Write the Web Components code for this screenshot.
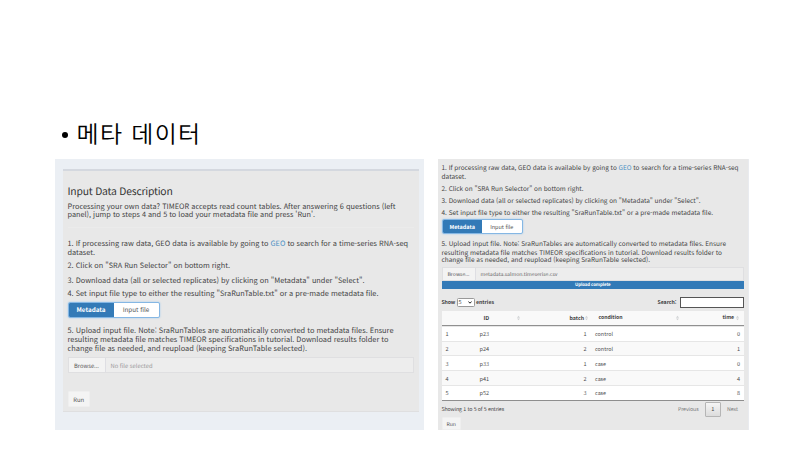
<!DOCTYPE html>
<html lang="ko">
<head>
<meta charset="utf-8">
<title>메타 데이터</title>
<style>
html,body{margin:0;background:#fff}
body{width:800px;height:450px;overflow:hidden;font-family:"Noto Sans CJK KR","Noto Sans",sans-serif;color:#444;text-rendering:geometricPrecision}
</style>
</head>
<body>
<slide-page></slide-page>
<script>
// One line of text, sized so that it fills the width in its "w" attribute.
class FitLine extends HTMLElement{
  constructor(){
    super();
    this.attachShadow({mode:'open'}).innerHTML=`<style>
      :host{display:block;white-space:nowrap;height:var(--lh,9px);line-height:calc(var(--lh,9px) + var(--drop,0px))}
      span{display:inline-block;vertical-align:top}
      ::slotted(a){color:#4a90c4}
    </style><span><slot></slot></span>`;
  }
  connectedCallback(){
    const w=parseFloat(this.getAttribute('w'));
    if(!w)return;
    const s=this.shadowRoot.querySelector('span');
    const n=this.textContent.length;
    const size=parseFloat(getComputedStyle(s).fontSize);
    if(n>2&&!this.hasAttribute('track')){
      const k=w/s.getBoundingClientRect().width;
      s.style.fontSize=size*Math.min(1.12,Math.max(.94,k))+'px';
    }
    const natural=s.getBoundingClientRect().width;
    s.style.letterSpacing=((w-natural)/n)+'px';
  }
}

class ToggleGroup extends HTMLElement{
  constructor(){
    super();
    this.attachShadow({mode:'open'}).innerHTML=`<style>
      :host{display:flex;box-sizing:border-box;width:var(--tw);height:var(--th);border:1px solid #85b7e4;border-radius:2px;background:#fff;box-shadow:0 0 2px #9cc8ee;font-size:var(--tf);overflow:hidden}
      div{flex:1;display:flex;align-items:center;justify-content:center;--lh:10px;--drop:0px;color:#555}
      .on{background:#337ab7;color:#fff;font-weight:700}
    </style><div class="on"><fit-line class="m">Metadata</fit-line></div><div><fit-line class="i">Input file</fit-line></div>`;
    this.shadowRoot.querySelector('.m').setAttribute('w',this.getAttribute('mw'));
    this.shadowRoot.querySelector('.i').setAttribute('w',this.getAttribute('iw'));
  }
}

class FileField extends HTMLElement{
  constructor(){
    super();
    this.attachShadow({mode:'open'}).innerHTML=`<style>
      :host{display:flex;box-sizing:border-box;border:1px solid #dfdfe1;background:#ededed;align-items:stretch;--lh:10px;--drop:1px}
      .b{box-sizing:border-box;width:var(--bw);background:#f3f3f3;border-right:1px solid #dedee3;display:flex;align-items:center;justify-content:center;color:#555}
      .n{display:flex;align-items:center;padding-left:5px;color:var(--nc,#999)}
    </style><div class="b"><slot name="button"></slot></div><div class="n"><slot></slot></div>`;
  }
}

class RunButton extends HTMLElement{
  constructor(){
    super();
    this.attachShadow({mode:'open'}).innerHTML=`<style>
      :host{display:flex;align-items:center;justify-content:center;box-sizing:border-box;background:#f4f4f4;border:1px solid #efefef;border-radius:1px;color:#555;--lh:10px;--drop:1px}
    </style><slot></slot>`;
  }
}

class SortMark extends HTMLElement{
  constructor(){
    super();
    this.attachShadow({mode:'open'}).innerHTML=`<style>:host{display:block;width:3px;height:6px}svg{display:block}</style>
    <svg width="3" height="6" viewBox="0 0 4 7"><path d="M0 3 2 .5 4 3ZM0 4 2 6.5 4 4Z" fill="#d0d2d4"/></svg>`;
  }
}

class DataGrid extends HTMLElement{
  constructor(){
    super();
    const rows=[[1,'p23',1,'control',0],[2,'p24',2,'control',1],[3,'p33',1,'case',0],[4,'p41',2,'case',4],[5,'p52',3,'case',8]];
    const cw={control:18,case:11};
    this.attachShadow({mode:'open'}).innerHTML=`<style>
      :host{display:block;font-size:5.5px;border-bottom:1px solid #8e8e8e;--lh:9px;--drop:1.4px}
      .r{display:grid;grid-template-columns:38px 80px 27px 8.5px 83px 62px 3px;align-items:center;box-sizing:border-box;height:14.8px;background:#fff;border-top:1px solid #e6e6e6;color:#4c4c4c}
      .r:nth-child(even){background:#f9f9f9}
      .r:nth-child(2){border-top:0}
      .r>:first-child{padding-left:4px}
      .num{justify-self:end}
      .h{height:15px;background:none;border:0;border-bottom:1px solid #909090;font-weight:700;color:#444;grid-template-columns:42px 33px 53px 15px 4px 10px 77px 49px 9.5px 6px}
      .h>*{justify-self:start}
      .h>.num{justify-self:end}
      .h>:last-child{justify-self:end;margin-right:1px}
    </style>
    <div class="r h"><i></i><fit-line w="5.5">ID</fit-line><sort-mark></sort-mark><fit-line w="14.5">batch</fit-line><sort-mark></sort-mark><i></i><fit-line w="24">condition</fit-line><sort-mark></sort-mark><fit-line w="11.5" class="num">time</fit-line><sort-mark></sort-mark></div>
    ${rows.map(r=>`<div class="r"><fit-line w="3">${r[0]}</fit-line><fit-line w="9.5">${r[1]}</fit-line><fit-line class="num" w="3">${r[2]}</fit-line><i></i><fit-line w="${cw[r[3]]}">${r[3]}</fit-line><fit-line class="num" w="3">${r[4]}</fit-line></div>`).join('')}`;
  }
}

class InputPanel extends HTMLElement{
  constructor(){
    super();
    this.attachShadow({mode:'open'}).innerHTML=`<style>
      :host{display:block;box-sizing:border-box;width:369px;height:271px;background:#ebeff4;padding:10px 5px 0 8px}
      .box{box-sizing:border-box;width:356px;height:243px;background:#e8e8e8;border-top:2px solid #d4d8df;border-bottom:1px solid #dfdfe0;padding:12px 5px 0 4.5px;font-size:7.6px;--lh:9.1px;--drop:2.4px;display:flex;flex-direction:column;align-items:flex-start}
      .t{font-size:11px;--lh:14px;color:#333;margin-bottom:3.7px}
      hr{align-self:stretch;border:0;border-top:1px solid #ebebeb;margin:8px 0 9.8px;height:0}
      .s{margin-top:4.8px}
      toggle-group{--tw:92px;--th:16px;--tf:6.3px;margin:4px 0 7.2px}
      file-field{align-self:stretch;height:16.5px;flex:none;--bw:37px;font-size:6.2px;margin-top:4.5px}
      run-button{width:22.5px;height:15.5px;font-size:6.2px;margin-top:18px}
    </style>
    <div class="box">
      <fit-line class="t" w="105">Input Data Description</fit-line>
      <fit-line w="328">Processing your own data? TIMEOR accepts read count tables. After answering 6 questions (left</fit-line>
      <fit-line w="247.5">panel), jump to steps 4 and 5 to load your metadata file and press 'Run'.</fit-line>
      <hr>
      <fit-line w="340.5">1. If processing raw data, GEO data is available by going to <a>GEO</a> to search for a time-series RNA-seq</fit-line>
      <fit-line w="27.5">dataset.</fit-line>
      <fit-line class="s" w="162.5">2. Click on "SRA Run Selector" on bottom right.</fit-line>
      <fit-line class="s" w="297">3. Download data (all or selected replicates) by clicking on "Metadata" under "Select".</fit-line>
      <fit-line class="s" w="311">4. Set input file type to either the resulting "SraRunTable.txt" or a pre-made metadata file.</fit-line>
      <toggle-group mw="25.5" iw="25"></toggle-group>
      <fit-line w="326">5. Upload input file. Note: SraRunTables are automatically converted to metadata files. Ensure</fit-line>
      <fit-line w="321">resulting metadata file matches TIMEOR specifications in tutorial. Download results folder to</fit-line>
      <fit-line w="239.5">change file as needed, and reupload (keeping SraRunTable selected).</fit-line>
      <file-field><fit-line slot="button" w="25">Browse...</fit-line><fit-line w="42">No file selected</fit-line></file-field>
      <run-button><fit-line w="11">Run</fit-line></run-button>
    </div>`;
  }
}

class ResultPanel extends HTMLElement{
  constructor(){
    super();
    this.attachShadow({mode:'open'}).innerHTML=`<style>
      :host{display:flex;flex-direction:column;align-items:flex-start;box-sizing:border-box;width:311px;height:271px;background:#e8e8e8;border-right:1px solid #e9ebef;padding:4.4px 4px 0 3.5px;font-size:6.7px;--lh:8px;--drop:2px;overflow:hidden}
      .s{margin-top:4.2px}
      toggle-group{--tw:81px;--th:14.5px;--tf:5.5px;margin:3.5px 0 5.3px}
      file-field{align-self:stretch;height:14.5px;flex:none;--bw:33px;--nc:#666;font-size:5.5px;margin-top:3.5px}
      .bar{align-self:stretch;height:8px;flex:none;background:#337ab7;color:#fff;font-size:4.7px;font-weight:700;display:flex;justify-content:center;align-items:center;--drop:0px}
      .ctl{align-self:stretch;display:flex;align-items:center;height:13px;margin-top:6.8px;font-size:5.5px;font-weight:700;color:#444}
      .sel{box-sizing:border-box;width:18px;height:9px;margin:0 1.5px 0 1.5px;border:1px solid #999;border-radius:1.5px;background:#fff;font-weight:400;display:flex;align-items:center;justify-content:space-between;padding:0 2px 0 1px;--drop:0px}
      .inp{box-sizing:border-box;width:64.5px;height:11px;border:1px solid #555;background:#fff;margin-left:3px}
      .sp{flex:1}
      data-grid{align-self:stretch;margin-top:2px}
      .foot{align-self:stretch;display:flex;align-items:center;height:15px;margin-top:.8px;font-size:5.6px;--drop:0px}
      .pg{box-sizing:border-box;width:15.5px;height:15px;border:1px solid #b5b5b5;border-radius:1px;background:linear-gradient(#f5f5f5,#dcdcdc);display:flex;align-items:center;justify-content:center;margin:0 6.5px}
      .d{color:#777}
      .nx{margin-right:6px}
      run-button{width:19.5px;height:13px;flex:none;font-size:5.5px;margin-top:.4px}
    </style>
    <fit-line w="297">1. If processing raw data, GEO data is available by going to <a>GEO</a> to search for a time-series RNA-seq</fit-line>
    <fit-line w="24.5">dataset.</fit-line>
    <fit-line class="s" w="142">2. Click on "SRA Run Selector" on bottom right.</fit-line>
    <fit-line class="s" w="259">3. Download data (all or selected replicates) by clicking on "Metadata" under "Select".</fit-line>
    <fit-line class="s" w="271.5">4. Set input file type to either the resulting "SraRunTable.txt" or a pre-made metadata file.</fit-line>
    <toggle-group mw="22.5" iw="21.5"></toggle-group>
    <fit-line w="284.5">5. Upload input file. Note: SraRunTables are automatically converted to metadata files. Ensure</fit-line>
    <fit-line w="280.5">resulting metadata file matches TIMEOR specifications in tutorial. Download results folder to</fit-line>
    <fit-line w="208.5">change file as needed, and reupload (keeping SraRunTable selected).</fit-line>
    <file-field><fit-line slot="button" w="22">Browse...</fit-line><fit-line w="77">metadata.salmon.timeserise.csv</fit-line></file-field>
    <div class="bar"><fit-line w="35.5">Upload complete</fit-line></div>
    <div class="ctl"><fit-line w="13.5">Show</fit-line><div class="sel"><fit-line w="3">5</fit-line><svg width="4" height="3" viewBox="0 0 4 3"><path d="M.4.5 2 2.2 3.6.5" fill="none" stroke="#222" stroke-width="1"/></svg></div><fit-line w="18">entries</fit-line><div class="sp"></div><fit-line w="19">Search:</fit-line><div class="inp"></div></div>
    <data-grid></data-grid>
    <div class="foot"><fit-line w="62.5">Showing 1 to 5 of 5 entries</fit-line><div class="sp"></div><fit-line class="d" w="20.5">Previous</fit-line><div class="pg"><fit-line w="3">1</fit-line></div><fit-line class="d nx" w="11">Next</fit-line></div>
    <run-button><fit-line w="9.5">Run</fit-line></run-button>`;
  }
}

class SlidePage extends HTMLElement{
  constructor(){
    super();
    this.attachShadow({mode:'open'}).innerHTML=`<style>
      :host{display:block;box-sizing:border-box;width:800px;height:450px;padding:116px 51px 0 55px}
      h1{margin:0;height:34px;padding-left:6px;display:flex;align-items:center;font-weight:350;font-size:24px;color:#000;--lh:34px}
      .dot{width:6px;height:6px;border-radius:50%;background:#000;margin:4px 8.5px 0 1px}
      .cols{display:flex;gap:14px;margin-top:9px}
    </style>
    <h1><span class="dot"></span><fit-line track w="125">메타 데이터</fit-line></h1>
    <div class="cols"><input-panel></input-panel><result-panel></result-panel></div>`;
  }
}
customElements.define('fit-line',FitLine);
customElements.define('toggle-group',ToggleGroup);
customElements.define('file-field',FileField);
customElements.define('run-button',RunButton);
customElements.define('sort-mark',SortMark);
customElements.define('data-grid',DataGrid);
customElements.define('input-panel',InputPanel);
customElements.define('result-panel',ResultPanel);
customElements.define('slide-page',SlidePage);
</script>
</body>
</html>
